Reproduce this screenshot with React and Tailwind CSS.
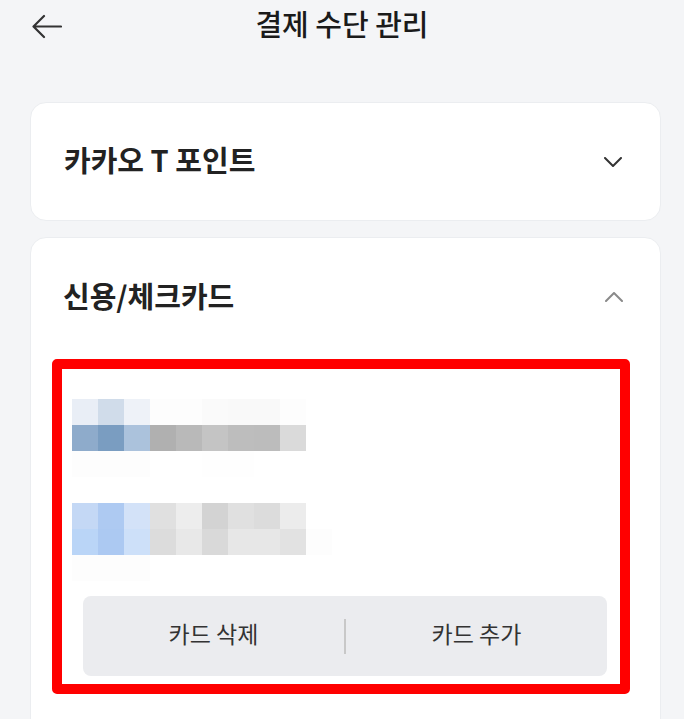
import React from 'react';

const mosaic = [
  ['bg-[#e9eef6]', 'bg-[#d0dcea]', 'bg-[#eef2f8]', 'bg-[#fdfdfd]', 'bg-[#fdfdfd]', 'bg-[#fafafa]', 'bg-[#f9f9f9]', 'bg-[#f9f9f9]', 'bg-[#fdfdfd]'],
  ['bg-[#8eabcb]', 'bg-[#7a9dc1]', 'bg-[#abc2dc]', 'bg-[#b0b0b0]', 'bg-[#b9b9b9]', 'bg-[#c4c4c4]', 'bg-[#bdbdbd]', 'bg-[#bcbcbc]', 'bg-[#dadada]'],
  ['bg-[#fdfdfd]', 'bg-[#fdfdfd]', 'bg-[#fdfdfd]', 'bg-white', 'bg-white', 'bg-[#fefefe]', 'bg-[#fefefe]', 'bg-white', 'bg-white'],
  ['bg-white', 'bg-white', 'bg-white', 'bg-white', 'bg-white', 'bg-white', 'bg-white', 'bg-white', 'bg-white'],
  ['bg-[#c4d8f5]', 'bg-[#aecaf2]', 'bg-[#d3e2f8]', 'bg-[#e0e0e0]', 'bg-[#ededed]', 'bg-[#d3d3d3]', 'bg-[#e0e0e0]', 'bg-[#dcdcdc]', 'bg-[#ececec]'],
  ['bg-[#bad5f7]', 'bg-[#acc9f2]', 'bg-[#cde0f9]', 'bg-[#dcdcdc]', 'bg-[#e8e8e8]', 'bg-[#d9d9d9]', 'bg-[#e7e7e7]', 'bg-[#e7e7e7]', 'bg-[#e2e2e2]', 'bg-[#fdfdfd]'],
  ['bg-[#fdfdfd]', 'bg-[#fdfdfd]', 'bg-[#fdfdfd]', 'bg-white', 'bg-white', 'bg-white', 'bg-white', 'bg-white', 'bg-white'],
];

const Chevron = ({ up, className }) => (
  <svg width="18" height="10" viewBox="0 0 18 10" fill="none" className={className}>
    <path
      d={up ? 'M1 9l8-8 8 8' : 'M1 1l8 8 8-8'}
      stroke="currentColor"
      strokeWidth="2"
      strokeLinecap="round"
      strokeLinejoin="round"
    />
  </svg>
);

const App = () => {
  return (
    <div
      className="min-h-screen bg-[#f4f5f7] text-[#222]"
      style={{ fontFamily: '"Noto Sans CJK KR", "Noto Sans", sans-serif' }}
    >
      {/* header */}
      <div className="relative h-[52px] pb-[6px] flex items-center justify-center">
        <button className="absolute left-[31px] top-[14px] text-[#333]">
          <svg width="31" height="25" viewBox="0 0 31 25" fill="none">
            <path
              d="M30 12.5H3M13 2L2.5 12.5 13 23"
              stroke="currentColor"
              strokeWidth="2.2"
              strokeLinecap="round"
              strokeLinejoin="round"
            />
          </svg>
        </button>
        <h1 className="text-[29px] font-medium leading-none text-[#1a1a1a]">결제 수단 관리</h1>
      </div>

      <div className="pt-[50px] pl-[30px] pr-[23px] flex flex-col gap-[16px]">
        <div className="h-[119px] bg-white rounded-[16px] border border-[#ebedf0] flex items-center justify-between pl-[33px] pr-[38px]">
          <span className="text-[29px] font-bold leading-none text-[#222] pb-[5px]">카카오 T 포인트</span>
          <Chevron className="text-[#333]" />
        </div>

        <div className="bg-white rounded-t-[16px] border border-[#ebedf0] pb-[40px]">
          <div className="h-[118px] flex items-center justify-between pl-[32px] pr-[37px]">
            <span className="text-[29px] font-bold leading-none text-[#222] pb-[3px]">신용/체크카드</span>
            <Chevron up className="text-[#8a8a8a]" />
          </div>

          <div className="mt-[3px] ml-[21px] w-[578px] h-[335px] border-[10px] border-[#ff0000] rounded-[5px] flex flex-col">
            <div className="pt-[30px] pl-[10px] flex flex-col">
              {mosaic.map((row, i) => (
                <div key={i} className="flex">
                  {row.map((c, j) => (
                    <div key={j} className={`w-[26px] h-[26px] ${c}`} />
                  ))}
                </div>
              ))}
            </div>
            <div className="mt-[15px] ml-[21px] w-[524px] h-[80px] bg-[#ebecef] rounded-[8px] flex items-center">
              <button className="flex-1 text-[23px] text-[#333] leading-none pb-[5px]">카드 삭제</button>
              <div className="w-[2px] h-[35px] bg-[#c8c8c8]" />
              <button className="flex-1 text-[23px] text-[#333] leading-none pb-[5px]">카드 추가</button>
            </div>
          </div>
        </div>
      </div>
    </div>
  );
};

export default App;
